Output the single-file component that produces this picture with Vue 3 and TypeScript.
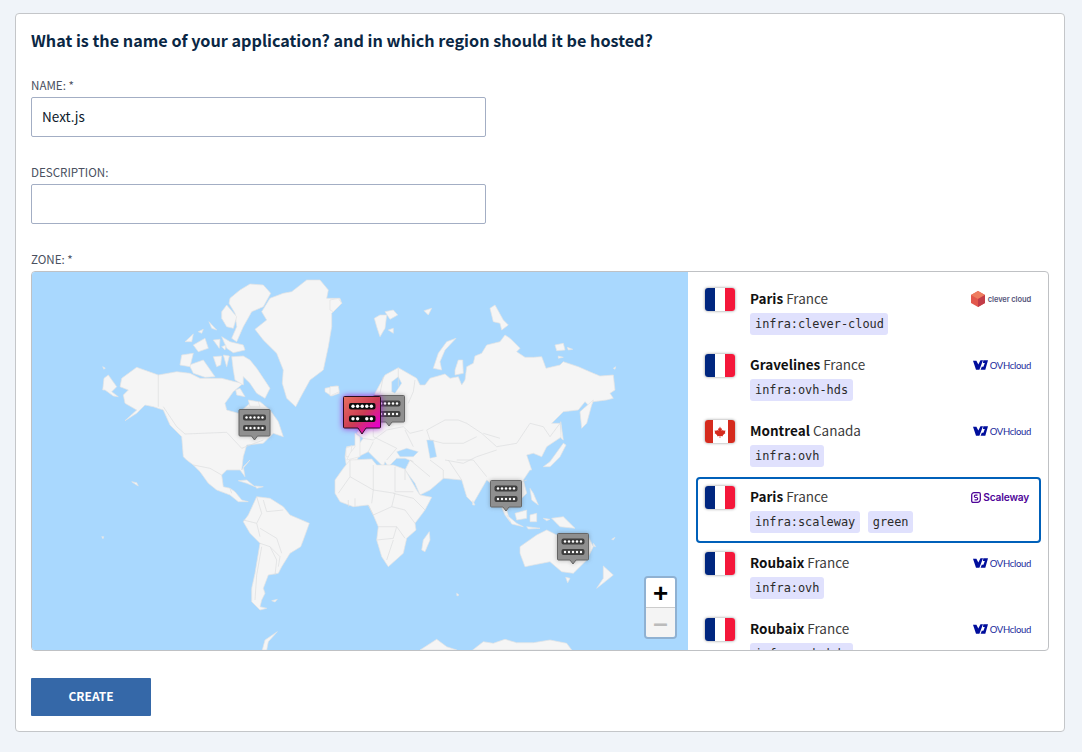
<script setup lang="ts">
type Tag = string
interface Zone {
  city: string
  country: string
  flag: 'fr' | 'ca'
  logo: 'clever' | 'ovh' | 'scaleway'
  tags: Tag[]
  selected?: boolean
}

const zones: Zone[] = [
  { city: 'Paris', country: 'France', flag: 'fr', logo: 'clever', tags: ['infra:clever-cloud'] },
  { city: 'Gravelines', country: 'France', flag: 'fr', logo: 'ovh', tags: ['infra:ovh-hds'] },
  { city: 'Montreal', country: 'Canada', flag: 'ca', logo: 'ovh', tags: ['infra:ovh'] },
  { city: 'Paris', country: 'France', flag: 'fr', logo: 'scaleway', tags: ['infra:scaleway', 'green'], selected: true },
  { city: 'Roubaix', country: 'France', flag: 'fr', logo: 'ovh', tags: ['infra:ovh'] },
  { city: 'Roubaix', country: 'France', flag: 'fr', logo: 'ovh', tags: ['infra:ovh-hds'] }
]

const origins: Record<string, [number, number]> = { a: [30, 270], b: [330, 270], c: [30, 460], d: [330, 460] }

function parse(s: string): string {
  let o: [number, number] = origins.a
  const out: string[] = []
  for (const t of s.trim().split(/\s+/)) {
    if (t.endsWith(':')) {
      o = origins[t[0]]
    } else {
      const [x, y] = t.split(',').map(Number)
      out.push(`${(o[0] + x / 3).toFixed(1)},${(o[1] + y / 3).toFixed(1)}`)
    }
  }
  return out.join(' ')
}

const land: string[] = [
  // Greenland
  'a: 785,65 830,30 870,30 895,60 890,85 930,85 935,100 905,130 905,170 895,230 880,300 840,330 810,385 797,410 770,385 757,340 760,300 740,250 700,210 675,178 710,150 695,125 720,85 760,70',
  // North and Central America
  'a: 275,325 320,292 385,315 440,305 480,310 510,325 545,325 575,325 615,335 640,340 610,365 585,400 590,420 625,430 660,400 690,395 720,420 745,455 760,500 730,490 700,520 650,525 640,560 635,600 c: 660,0 640,20 645,50 630,30 590,30 575,45 580,80 600,85 615,95 635,120 655,125 625,125 600,105 560,90 535,70 510,35 490,15 470,0 a: 460,560 455,500 420,465 400,420 370,410 345,405 320,430 285,452 320,420 285,400 280,375 295,360 270,350',
  'a: 218,360 222,325 235,315 260,350 245,365 265,380 250,378 225,360',
  'a: 218,290 226,294 222,298',
  // Arctic islands
  'a: 605,260 640,258 660,270 680,295 710,340 720,355 705,385 680,370 660,340 640,320 640,345 615,330 610,300',
  'a: 600,85 630,60 660,42 700,45 722,70 700,110 665,125 640,170 620,215 605,205 620,170 615,130 597,100',
  'a: 575,125 590,105 620,140 610,175 590,170 575,145',
  'a: 575,200 600,215 640,225 645,240 610,248 590,235',
  'a: 478,285 520,270 555,320 525,322 490,310',
  'a: 455,255 490,250 480,290 450,285',
  'a: 550,260 575,258 572,285 560,290',
  'a: 580,255 598,258 590,290',
  'a: 465,215 490,192 485,215',
  'a: 490,225 525,205 535,235 505,245',
  'a: 550,210 570,208 568,235',
  'a: 537,155 560,180 545,175',
  'a: 505,185 520,178 515,190',
  'a: 575,230 588,225 585,240',
  'a: 617,360 630,355 645,380 620,375',
  'a: 655,390 685,395 690,410 660,410',
  'a: 885,355 920,348 928,370 905,378 885,365',
  // Caribbean, Pacific
  'c: 625,62 650,60 675,80 650,70',
  'c: 675,78 700,80 680,85',
  'c: 305,65 320,68 325,78 315,72',
  'c: 215,230 221,230 219,236',
  // South America
  'c: 655,165 680,110 720,115 760,140 780,165 838,190 820,240 812,260 780,280 755,320 745,340 715,345 700,385 705,400 695,420 690,440 710,445 690,450 665,425 665,385 675,340 690,250 660,220 640,185',
  'c: 725,422 742,418 735,426',
  // Antarctica
  'c: 697,570 705,540 742,515 715,545 710,570',
  'd: 270,570 320,538 350,560 380,570',
  'd: 428,570 460,545 490,550 525,538 560,548 610,548 660,540 710,550 725,570',
  // Eurasia
  'b: 50,530 85,525 100,505 80,490 90,475 130,440 135,370 165,315 205,293 260,325 270,345 285,345 300,325 345,312 360,325 385,320 395,345 405,330 410,290 430,280 435,258 455,250 470,225 510,215 525,195 540,205 570,235 560,245 585,262 610,262 635,260 648,295 690,285 700,275 745,290 790,310 810,318 850,315 855,360 840,370 850,385 830,390 790,395 780,410 765,395 745,420 700,425 665,460 690,460 695,500 650,530 635,560 610,550 590,555 605,600 d: 600,30 580,60 590,100 570,120 550,125 530,150 540,185 525,165 510,130 495,80 470,60 430,130 410,110 395,60 340,55 335,60 300,90 270,105 255,70 225,30 240,0 b: 250,575 225,565 200,565 175,590 165,575 160,590 130,560 115,545 85,560 75,590 50,595 45,560',
  // Islands around Eurasia
  'a: 948,535 965,527 962,560 948,560',
  'a: 975,490 990,500 990,560 950,570 960,550 975,530',
  'b: 0,350 25,348 28,365 0,378',
  'b: 0,90 25,85 35,100 10,125 0,120',
  'b: 133,145 150,135 170,135 165,175 150,200 140,170',
  'b: 165,125 190,120 203,135 180,148',
  'b: 175,180 190,175 190,190',
  'b: 282,122 305,115 295,135',
  'b: 310,295 325,250 350,215 378,205 345,240 330,275 335,300',
  'b: 375,300 385,270 398,270 400,310 375,315',
  'b: 480,115 495,105 520,150 535,165 515,180 510,160 490,155',
  'b: 675,225 700,220 705,240 680,242',
  'b: 712,232 728,238 715,240',
  'b: 685,258 700,262 685,265',
  'b: 850,295 857,290 855,298',
  'b: 750,425 790,390 785,405 770,460 755,475',
  'b: 692,455 700,510 693,505',
  'b: 640,590 660,575 700,520 708,525 690,560 660,590',
  // Africa and neighbours
  'd: 15,100 15,60 40,25 60,0 125,-3 140,15 190,15 225,28 260,90 270,105 305,112 285,150 255,190 258,210 230,235 220,280 175,320 155,290 140,240 145,200 130,165 115,135 70,140 30,125',
  'd: 280,240 298,215 300,240 285,275 275,270',
  'd: 428,122 435,135 428,135',
  // South East Asia and Oceania
  'd: 530,165 560,190 580,200 545,192',
  'd: 555,160 590,150 590,175 560,180',
  'd: 600,165 620,160 620,185 600,185',
  'd: 600,85 610,100 625,135 605,120',
  'd: 665,175 700,170 735,205 690,200',
  'd: 590,200 630,205 595,207',
  'd: 640,175 660,178 650,182',
  'd: 570,260 620,225 650,210 680,225 775,230 790,260 770,300 730,340 695,335 660,305 610,315 585,320 570,280',
  'd: 707,352 720,355 713,368',
  'd: 820,318 850,345 825,365 800,385 820,355',
  'd: 790,250 797,260 790,258',
  'd: 845,238 855,232 850,240',
  'd: 380,400 387,405 381,408'
].map(parse)

const seas: string[] = [
  'b: 200,545 230,535 265,545 250,560 210,560',
  'b: 290,510 310,510 320,560 300,565',
  'b: 185,335 205,320 215,340 195,370 185,365',
  'b: 165,440 150,410 175,385 190,400 185,430'
].map(parse)

const borders: string[] = [
  'a: 385,315 385,410',
  'a: 400,410 440,470 465,492 590,487 635,535 700,510',
  'c: 490,15 540,25 575,45',
  'c: 600,85 605,100',
  'c: 680,110 695,160 680,190 690,230',
  'c: 700,120 710,155 760,150',
  'c: 640,180 680,190',
  'c: 690,205 740,235 755,280',
  'c: 690,250 720,260 750,290 745,320',
  'c: 695,260 680,345 675,420',
  'c: 720,260 740,300 735,345',
  'd: 60,0 60,50 25,100',
  'd: 60,50 130,90 130,15',
  'd: 130,90 125,130',
  'd: 195,20 195,95 250,95',
  'd: 130,90 195,100 185,140 225,150 255,190',
  'd: 115,135 130,165 185,140',
  'd: 145,200 200,200 225,235',
  'd: 140,240 190,235 200,200',
  'd: 190,240 170,300',
  'd: 75,115 75,140',
  'd: 55,120 55,140',
  'd: 190,100 250,115 285,150',
  'd: 225,60 225,30',
  'b: 290,480 345,450 385,450 410,460 455,490 500,530 560,520 600,460 640,470 660,500 690,460',
  'b: 290,480 300,510 340,520 400,520 440,500',
  'b: 460,490 510,505',
  'b: 345,570 400,580 440,560 500,540',
  'b: 130,440 130,500 170,520',
  'b: 100,505 130,510 170,480 220,470 240,490 280,480',
  'b: 160,320 150,370',
  'b: 205,295 205,350',
  'b: 255,330 250,365 235,400',
  'b: 115,545 130,515',
  'b: 170,520 200,535 170,570',
  'b: 225,480 250,530',
  'd: 355,0 395,60',
  'd: 380,0 430,0 470,50',
  'd: 300,0 340,30 340,55',
  'd: 240,0 300,50',
  'd: 510,60 540,80 590,60'
].map(parse)

interface Pin { x: number; y: number }
const pins: Pin[] = [
  { x: 373, y: 395 },
  { x: 238.5, y: 409 },
  { x: 490, y: 480 },
  { x: 557, y: 533 }
]
const dots = [0, 1, 2, 3, 4]
</script>

<template>
  <main class="card">
    <h2 class="title">What is the name of your application? and in which region should it be hosted?</h2>

    <div class="field">
      <label class="label" for="app-name">Name: *</label>
      <input id="app-name" class="input" type="text" value="Next.js" />
    </div>

    <div class="field">
      <label class="label" for="app-desc">Description:</label>
      <input id="app-desc" class="input" type="text" />
    </div>

    <div class="field zone-field">
      <span class="label">Zone: *</span>
      <div class="zone-box">
        <div class="map">
          <svg class="map-svg" viewBox="32 272 656 378" preserveAspectRatio="none" xmlns="http://www.w3.org/2000/svg">
            <defs>
              <linearGradient id="sel" x1="0" y1="0" x2="1" y2="1">
                <stop offset="0" stop-color="#e8705f" />
                <stop offset="0.5" stop-color="#cc3c55" />
                <stop offset="0.85" stop-color="#e600cc" />
              </linearGradient>
            </defs>
            <polygon v-for="(p, i) in land" :key="'l' + i" class="land" :points="p" />
            <polygon v-for="(p, i) in seas" :key="'s' + i" class="sea" :points="p" />
            <polyline v-for="(p, i) in borders" :key="'b' + i" class="border" :points="p" />

            <g v-for="(pin, i) in pins" :key="'p' + i" class="pin" :transform="`translate(${pin.x} ${pin.y})`">
              <path class="pin-body" d="M1.5 .5H30.5a1 1 0 0 1 1 1V26a1 1 0 0 1 -1 1H19L16 31L13 27H1.5a1 1 0 0 1 -1 -1V1.500a1 1 0 0 1 1 -1Z" />
              <rect class="pin-bar" x="4.500" y="5.500" width="23" height="6" rx="2" />
              <rect class="pin-bar" x="4.500" y="16" width="23" height="6" rx="2" />
              <circle v-for="d in dots" :key="'t' + d" class="pin-dot" :cx="8 + d * 4" cy="8.500" r="1.200" />
              <circle v-for="d in dots" :key="'u' + d" class="pin-dot" :cx="8 + d * 4" cy="19" r="1.200" />
            </g>

            <g class="pin-selected" transform="translate(343 396)">
              <path fill="url(#sel)" stroke="#2a1020" d="M1.500 .5H36.500a1 1 0 0 1 1 1V31a1 1 0 0 1 -1 1H23L19 38L15 32H1.500a1 1 0 0 1 -1 -1V1.500a1 1 0 0 1 1 -1Z" />
              <rect x="6" y="7" width="26.500" height="6.500" rx="2" fill="#0c0c0c" />
              <rect x="6" y="19.500" width="26.500" height="6.500" rx="2" fill="#0c0c0c" />
              <circle v-for="d in dots" :key="'v' + d" fill="#fff" :cx="10 + d * 4.600" cy="10.200" r="1.700" />
              <circle v-for="d in [0, 1, 3, 4]" :key="'w' + d" fill="#fff" :cx="10 + d * 4.600" cy="22.700" r="1.700" />
            </g>
          </svg>

          <div class="zoom">
            <button class="zoom-btn zoom-in" type="button">+</button>
            <button class="zoom-btn zoom-out" type="button">&#8211;</button>
          </div>
        </div>

        <ul class="list">
          <li v-for="(z, i) in zones" :key="i" class="zone" :class="{ selected: z.selected }">
            <span class="flag" :class="'flag-' + z.flag">
              <svg v-if="z.flag === 'ca'" class="leaf" viewBox="0 0 24 24" xmlns="http://www.w3.org/2000/svg">
                <path d="M12 1L14 5.500L16 4.500L15.200 10L18 7.500L19 9.500L23 9L21.800 13L23 14L17.500 18.500L18 20.500L12.700 19.800V24H11.300V19.800L6 20.500L6.500 18.500L1 14L2.200 13L1 9L5 9.500L6 7.500L8.800 10L8 4.500L10 5.500Z" />
              </svg>
            </span>
            <div class="zone-main">
              <div class="zone-name"><strong>{{ z.city }}</strong> {{ z.country }}</div>
              <div class="tags">
                <code v-for="t in z.tags" :key="t" class="tag">{{ t }}</code>
              </div>
            </div>
            <div class="logo">
              <span v-if="z.logo === 'clever'" class="logo-clever">
                <svg class="clever-mark" viewBox="0 0 14 16" xmlns="http://www.w3.org/2000/svg">
                  <polygon points="7,0 14,4 14,12 7,16 0,12 0,4" fill="#e2574c" />
                  <polygon points="7,0 14,4 7,8 0,4" fill="#ee7c5f" />
                  <polygon points="7,8 14,4 14,12 7,16" fill="#c23c48" />
                </svg>
                <span class="clever-text">clever cloud</span>
              </span>
              <span v-else-if="z.logo === 'ovh'" class="logo-ovh">
                <svg class="ovh-mark" viewBox="0 0 15 10" xmlns="http://www.w3.org/2000/svg">
                  <path d="M0 .8H3.400L5.300 4.500L7.500 .3H10L6.400 9.700H3Z" />
                  <path d="M10.300 .3H15L12.300 9.700H7.600L8.800 6.800H10.400L11.800 3H10Z" />
                </svg>
                <span class="ovh-text">OVHcloud</span>
              </span>
              <span v-else class="logo-scw">
                <svg class="scw-mark" viewBox="0 0 10 11" xmlns="http://www.w3.org/2000/svg">
                  <path d="M3 .7H8A1.300 1.300 0 0 1 9.300 2V7.500A2.800 2.800 0 0 1 6.500 10.300H2A1.300 1.300 0 0 1 .7 9V3A2.300 2.300 0 0 1 3 .7Z" fill="none" stroke="#4f0599" stroke-width="1.300" />
                  <path d="M6.500 3.200H4.500A1.100 1.100 0 0 0 4.500 5.500H5.500A1.100 1.100 0 0 1 5.500 7.800H3.500" fill="none" stroke="#4f0599" stroke-width="1.200" />
                </svg>
                <span class="scw-text">Scaleway</span>
              </span>
            </div>
          </li>
        </ul>
      </div>
    </div>

    <button class="create" type="button">Create</button>
  </main>
</template>

<style>
html,
body {
  margin: 0;
  background: #f0f4f9;
}
</style>

<style scoped>
.card {
  box-sizing: border-box;
  width: 1050px;
  height: 719px;
  margin: 13px 0 0 15px;
  padding: 14px 15px 15px;
  background: #fff;
  border: 1px solid #c4c6c9;
  border-radius: 4px;
  font-family: 'Noto Sans CJK SC', 'Open Sans', sans-serif;
  color: #1a1a1a;
}
.title {
  margin: 0 0 25px;
  font-size: 16.2px;
  line-height: 24px;
  font-weight: 700;
  color: #0a2744;
}
.field {
  display: flex;
  flex-direction: column;
  margin-bottom: 27px;
}
.label {
  height: 16px;
  margin-bottom: 4px;
  font-size: 11.6px;
  line-height: 16px;
  text-transform: uppercase;
  color: #4a5060;
}
.input {
  box-sizing: border-box;
  width: 455px;
  height: 40px;
  padding: 0 10px 3px;
  background: #fff;
  border: 1px solid #a3aec4;
  border-radius: 2px;
  outline: none;
  font-family: inherit;
  font-size: 13.5px;
  color: #0e1a2b;
}
.zone-box {
  box-sizing: border-box;
  display: flex;
  height: 380px;
  border: 1px solid #bfc1c4;
  border-radius: 4px;
  overflow: hidden;
}
.map {
  position: relative;
  flex: 0 0 656px;
  background: #a9d8fe;
}
.map-svg {
  position: absolute;
  inset: 0;
  width: 100%;
  height: 100%;
}
.land {
  fill: #f5f5f5;
  stroke: #e4e4e4;
  stroke-width: 0.7;
}
.sea {
  fill: #a9d8fe;
  stroke: #e4e4e4;
  stroke-width: 0.5;
}
.border {
  fill: none;
  stroke: #dcdee0;
  stroke-width: 0.7;
}
.pin {
  filter: drop-shadow(0 0 2px rgba(60, 60, 60, 0.35));
}
.pin-body {
  fill: #8f8f8f;
  stroke: #666;
}
.pin-bar {
  fill: #3e3e3e;
}
.pin-dot {
  fill: #fff;
}
.pin-selected {
  filter: drop-shadow(0 0 3px #a020d0);
}
.zoom {
  position: absolute;
  right: 11px;
  bottom: 11px;
  display: flex;
  flex-direction: column;
  box-sizing: border-box;
  width: 33px;
  height: 63px;
  border: 2px solid #8fb1d2;
  border-radius: 4px;
  overflow: hidden;
}
.zoom-btn {
  flex: 1;
  padding: 0;
  border: 0;
  font-family: 'Liberation Sans', sans-serif;
  font-weight: 700;
  font-size: 26px;
  line-height: 28px;
}
.zoom-in {
  background: #fff;
  color: #000;
  border-bottom: 1px solid #ccc;
}
.zoom-out {
  background: #f4f4f4;
  color: #bbb;
}
.list {
  flex: 1;
  margin: 0;
  padding: 7px 7px 0 8px;
  list-style: none;
  overflow: hidden;
}
.zone {
  box-sizing: border-box;
  display: flex;
  height: 66px;
  padding: 7px 8px 0 7px;
  border: 2px solid transparent;
  border-radius: 4px;
}
.zone.selected {
  border-color: #0060b9;
}
.flag {
  flex: 0 0 30px;
  height: 23px;
  margin-right: 15px;
  border-radius: 3px;
  box-shadow: 0 0 3px rgba(0, 0, 0, 0.45);
  display: flex;
  align-items: center;
  justify-content: center;
}
.flag-fr {
  background: linear-gradient(to right, #00267f 33.3%, #fff 33.3%, #fff 66.6%, #f4173a 66.6%);
}
.flag-ca {
  background: linear-gradient(to right, #d52b1e 25%, #fff 25%, #fff 75%, #d52b1e 75%);
}
.leaf {
  width: 12px;
  height: 12px;
  fill: #d52b1e;
}
.zone-main {
  flex: 1;
  min-width: 0;
}
.zone-name {
  height: 22px;
  margin-bottom: 3px;
  font-size: 13.5px;
  line-height: 21px;
  color: #3c3c3c;
}
.zone-name strong {
  font-weight: 700;
  color: #111;
}
.tags {
  display: flex;
  gap: 8px;
}
.tag {
  box-sizing: border-box;
  height: 22px;
  padding: 0 4.500px 0 5px;
  background: #e0e1fd;
  border-radius: 3px;
  font-family: 'DejaVu Sans Mono', monospace;
  font-size: 11.9px;
  line-height: 22px;
  color: #2a2a2a;
}
.logo {
  flex: 0 0 auto;
  height: 22px;
  display: flex;
  align-items: center;
  justify-content: flex-end;
}
.logo-clever,
.logo-ovh,
.logo-scw {
  display: flex;
  align-items: center;
}
.clever-mark {
  width: 14px;
  height: 16px;
  margin-right: 3px;
}
.clever-text {
  font-family: Inter, sans-serif;
  font-size: 7.5px;
  font-weight: 600;
  letter-spacing: -0.1px;
  color: #55557a;
}
.ovh-mark {
  width: 15px;
  height: 10px;
  margin-right: 2px;
  fill: #000e9c;
}
.ovh-text {
  font-family: Lato, sans-serif;
  font-size: 9.5px;
  font-weight: 400;
  letter-spacing: -0.3px;
  color: #1a2a9c;
}
.scw-mark {
  width: 10px;
  height: 11px;
  margin-right: 2px;
}
.scw-text {
  font-family: Inter, sans-serif;
  font-size: 10.2px;
  font-weight: 600;
  letter-spacing: -0.2px;
  color: #4f0599;
  margin-right: 2px;
}
.create {
  display: block;
  width: 120px;
  height: 38px;
  padding: 0 0 4px;
  background: #3568a8;
  border: 0;
  border-radius: 1px;
  font-family: inherit;
  font-size: 12px;
  font-weight: 700;
  text-transform: uppercase;
  color: #fff;
}
</style>
